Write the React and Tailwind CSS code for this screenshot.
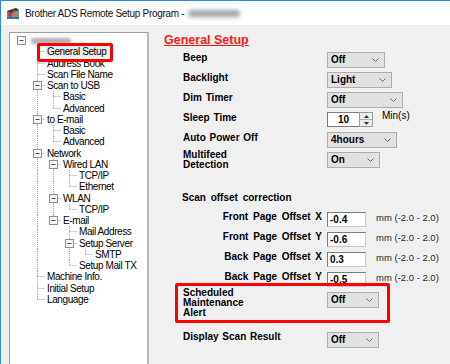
import React from 'react';

const tree = [
  {
    blur: true,
    children: [
      { label: 'General Setup', selected: true },
      { label: 'Address Book' },
      { label: 'Scan File Name' },
      { label: 'Scan to USB', children: [{ label: 'Basic' }, { label: 'Advanced' }] },
      { label: 'to E-mail', children: [{ label: 'Basic' }, { label: 'Advanced' }] },
      {
        label: 'Network',
        children: [
          { label: 'Wired LAN', children: [{ label: 'TCP/IP' }, { label: 'Ethernet' }] },
          { label: 'WLAN', children: [{ label: 'TCP/IP' }] },
          {
            label: 'E-mail',
            children: [
              { label: 'Mail Address' },
              { label: 'Setup Server', children: [{ label: 'SMTP' }] },
              { label: 'Setup Mail TX' },
            ],
          },
        ],
      },
      { label: 'Machine Info.' },
      { label: 'Initial Setup' },
      { label: 'Language' },
    ],
  },
];

function flatten(nodes, level = 0, guides = [], out = []) {
  nodes.forEach((n, i) => {
    const last = i === nodes.length - 1;
    out.push({ ...n, level, guides, last, hasKids: !!n.children });
    if (n.children) flatten(n.children, level + 1, [...guides, !last], out);
  });
  return out;
}

const rows = flatten(tree);

const dot = { stroke: '#a0a0a0', strokeWidth: 1, strokeDasharray: '1 1' };

function Guide({ on }) {
  return (
    <svg width="16" height="11.25" className="block shrink-0">
      {on && <line x1="8.5" y1="0" x2="8.5" y2="11.25" {...dot} />}
    </svg>
  );
}

function Elbow({ row }) {
  return (
    <svg width="16" height="11.25" className="block shrink-0">
      {row.level > 0 && <line x1="8.5" y1="0" x2="8.5" y2="5.5" {...dot} />}
      {row.level > 0 && !row.last && <line x1="8.5" y1="5.5" x2="8.5" y2="11.25" {...dot} />}
      {row.level > 0 && <line x1="8.5" y1="5.5" x2="16" y2="5.5" {...dot} />}
      {row.hasKids && (
        <g>
          <rect x="4.5" y="1.5" width="8" height="8" fill="#f4f4f4" stroke="#8e8f8f" />
          <line x1="6.5" y1="5.5" x2="10.5" y2="5.5" stroke="#2b4f86" strokeWidth="1" />
        </g>
      )}
    </svg>
  );
}

function Chevron() {
  return (
    <svg width="7" height="4" viewBox="0 0 7 4" className="block">
      <path d="M0.5 0.5 L3.5 3.5 L6.5 0.5" fill="none" stroke="#6a6a6a" strokeWidth="1" />
    </svg>
  );
}

function Select({ value, width }) {
  return (
    <div className={`flex h-[16px] items-center justify-between border border-[#adadad] bg-[#e1e1e1] pl-[3px] pr-[5px] text-[10px] leading-[10px] font-bold ${width}`}>
      <span>{value}</span>
      <Chevron />
    </div>
  );
}

function Field({ value }) {
  return (
    <div className="flex h-[15px] w-[39px] items-center border border-[#7a7a7a] border-r-[#c8c8c8] border-b-[#c8c8c8] bg-white pl-[2px] text-[10px] leading-[10px] font-bold">
      {value}
    </div>
  );
}

function Row({ label, children }) {
  return (
    <div className="flex h-[20px] items-start pl-[34px]">
      <div className="w-[144px] pt-[3px] text-[10px] leading-[10px] font-bold [word-spacing:1px]">{label}</div>
      <div className="mt-[2px] flex items-start">{children}</div>
    </div>
  );
}

function OffsetRow({ label, value }) {
  return (
    <div className="flex h-[20px] items-start pl-[34px]">
      <div className="w-[139px] pt-[4px] text-right text-[10px] leading-[10px] font-bold [word-spacing:2px]">{label}</div>
      <div className="ml-[5px] mt-[4px]">
        <Field value={value} />
      </div>
      <div className="ml-[10px] pt-[5px] text-[9.5px] leading-[10px] text-[#2a2a2a]">mm (-2.0 - 2.0)</div>
    </div>
  );
}

function AppIcon() {
  return (
    <svg width="14" height="14" viewBox="0 0 14 14" className="block">
      <path d="M1 5 L10 2 L13 4 L13 12 L1 12 Z" fill="#8c8c8c" />
      <path d="M1 5 L10 2 L13 4 L4 7 Z" fill="#3b3b3b" />
      <rect x="1" y="11" width="12" height="2" fill="#2f6fb8" />
      <path d="M3 10 L9 4" stroke="#e8262b" strokeWidth="1.6" />
      <path d="M3 10 L3 7 M3 10 L6 10" stroke="#e8262b" strokeWidth="1.4" />
      <rect x="9" y="9" width="3" height="1.5" fill="#3cb44a" />
    </svg>
  );
}

export default function App() {
  return (
    <div className="flex h-[364px] w-[450px] flex-col overflow-hidden border-l border-t border-[#2a8de0] font-['Liberation_Sans',Arial,sans-serif] text-black">
      <div className="flex h-[24px] shrink-0 items-center bg-white pl-[5px]">
        <AppIcon />
        <span className="ml-[5px] text-[10px] tracking-[-0.3px] text-[#111]">Brother ADS Remote Setup Program - </span>
        <span className="ml-[4px] h-[7px] w-[52px] rounded-[3px] bg-[#a4a4a4] blur-[2px]" />
      </div>

      <div className="flex flex-1 bg-[#f0f0f0]">
        <div className="relative ml-[8px] mt-[7px] w-[140px] shrink-0 border-l border-t border-[#a0a0a0] border-r-2 border-r-[#b8b8c0] bg-white pl-[3px] pt-[2px]">
          {rows.map((row, idx) => (
            <div key={idx} className="flex h-[11.25px] items-center">
              {row.guides.map((g, i) => (
                <Guide key={i} on={g} />
              ))}
              <Elbow row={row} />
              {row.blur ? (
                <span className="ml-[2px] h-[6px] w-[40px] rounded-[2px] bg-[#b0b0b0] blur-[1.5px]" />
              ) : (
                <span className={`ml-[1px] whitespace-nowrap px-[1px] text-[10px] leading-[11px] tracking-[-0.4px] ${row.selected ? 'bg-[#ececec]' : ''}`}>
                  {row.label}
                </span>
              )}
            </div>
          ))}
          <div className="absolute left-[27px] top-[10px] h-[19px] w-[76px] rounded-[2px] border-[3px] border-[#ff0000]" />
        </div>

        <div className="relative flex-1">
          <div className="h-[25px] pl-[15px] pt-[8px] text-[12.5px] leading-[14px] font-bold text-[#ff1a1a]">
            <span className="underline">General Setup</span>
          </div>

          <Row label="Beep">
            <Select value="Off" width="w-[58px]" />
          </Row>
          <Row label="Backlight">
            <Select value="Light" width="w-[65px]" />
          </Row>
          <Row label="Dim Timer">
            <Select value="Off" width="w-[76px]" />
          </Row>
          <Row label="Sleep Time">
            <div className="flex h-[15px] w-[32px] items-center justify-center border border-[#7a7a7a] border-r-0 bg-white text-[10px] leading-[10px] font-bold">
              10
            </div>
            <div className="flex h-[15px] w-[14px] flex-col border border-[#9a9a9a] bg-[#ececec]">
              <div className="flex flex-1 items-center justify-center border-b border-[#b0b0b0]">
                <svg width="5" height="3" viewBox="0 0 5 3" className="block">
                  <path d="M0 3 L2.5 0 L5 3 Z" fill="#333" />
                </svg>
              </div>
              <div className="flex flex-1 items-center justify-center">
                <svg width="5" height="3" viewBox="0 0 5 3" className="block">
                  <path d="M0 0 L2.5 3 L5 0 Z" fill="#333" />
                </svg>
              </div>
            </div>
            <span className="ml-[9px] -mt-[1px] text-[10px] leading-[10px]">Min(s)</span>
          </Row>
          <Row label="Auto Power Off">
            <Select value="4hours" width="w-[70px]" />
          </Row>
          <div className="flex h-[20px] items-start pl-[34px]">
            <div className="w-[144px] text-[10px] leading-[10px] font-bold">
              Multifeed
              <br />
              Detection
            </div>
            <div className="mt-[2px]">
              <Select value="On" width="w-[53px]" />
            </div>
          </div>

          <div className="h-[20px]" />

          <div className="h-[18px] pl-[33px] pt-[3px] text-[10px] leading-[10px] font-bold [word-spacing:2px]">
            Scan offset correction
          </div>
          <OffsetRow label="Front Page Offset X" value="-0.4" />
          <OffsetRow label="Front Page Offset Y" value="-0.6" />
          <OffsetRow label="Back Page Offset X" value="0.3" />
          <OffsetRow label="Back Page Offset Y" value="-0.5" />

          <div className="flex h-[42px] items-start pl-[34px]">
            <div className="w-[144px] text-[10px] leading-[10px] font-bold">
              Scheduled
              <br />
              Maintenance
              <br />
              Alert
            </div>
            <div className="mt-[4px]">
              <Select value="Off" width="w-[52px]" />
            </div>
          </div>

          <div className="flex h-[20px] items-start pl-[34px]">
            <div className="w-[144px] pt-[2px] text-[10px] leading-[10px] font-bold [word-spacing:1px]">Display Scan Result</div>
            <div className="mt-[2px]">
              <Select value="Off" width="w-[52px]" />
            </div>
          </div>

          <div className="absolute left-[26px] top-[258px] h-[40px] w-[215px] rounded-[2px] border-[3px] border-[#ff0000]" />
        </div>
      </div>
    </div>
  );
}
